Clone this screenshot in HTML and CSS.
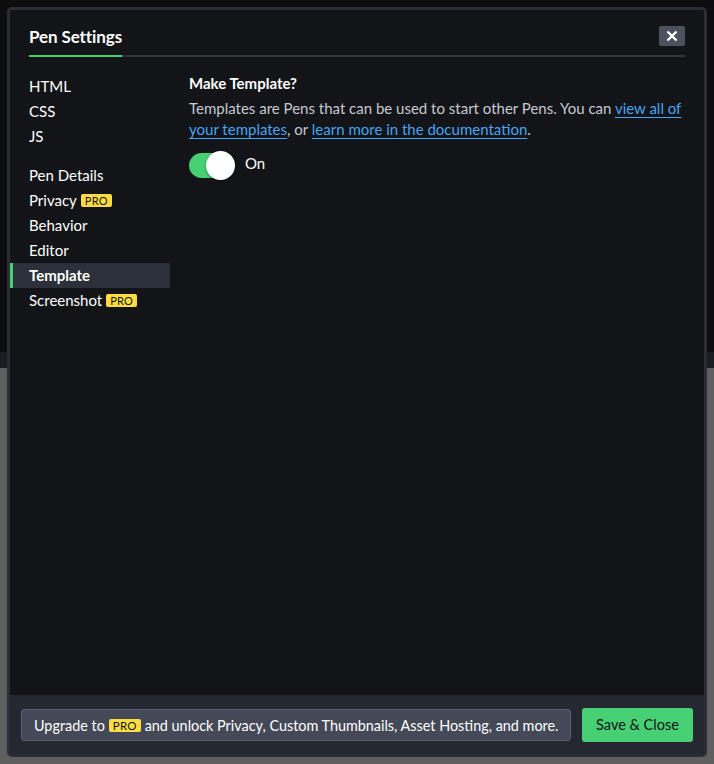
FILE: index.html
```html
<!DOCTYPE html>
<html>
<head>
<meta charset="utf-8">
<link rel="stylesheet" href="styles.css">
</head>
<body>
<div class="backdrop">
  <div class="bg-top"></div>
  <div class="bg-bar"></div>
  <div class="bg-bottom"></div>
</div>
<div class="modal">
  <div class="modal-main">
    <header class="modal-header">
      <h1 class="title">Pen Settings</h1>
      <button class="close" aria-label="Close">
        <svg width="12" height="12" viewBox="0 0 12 12"><path d="M1.5 1.5 L10.5 10.5 M10.5 1.5 L1.5 10.5" stroke="#fff" stroke-width="2.4" stroke-linecap="butt"/></svg>
      </button>
    </header>
    <div class="modal-body">
      <nav class="sidebar">
        <ul class="nav-group">
          <li class="nav-item">HTML</li>
          <li class="nav-item">CSS</li>
          <li class="nav-item">JS</li>
        </ul>
        <ul class="nav-group">
          <li class="nav-item">Pen Details</li>
          <li class="nav-item">Privacy <span class="pro">PRO</span></li>
          <li class="nav-item">Behavior</li>
          <li class="nav-item">Editor</li>
          <li class="nav-item active">Template</li>
          <li class="nav-item">Screenshot <span class="pro">PRO</span></li>
        </ul>
      </nav>
      <section class="content">
        <h2 class="heading">Make Template?</h2>
        <p class="desc">Templates are Pens that can be used to start other Pens. You can <a href="#">view all of your templates</a>, or <a href="#">learn more in the documentation</a>.</p>
        <div class="toggle-row">
          <span class="toggle"><span class="knob"></span></span>
          <span class="toggle-label">On</span>
        </div>
      </section>
    </div>
  </div>
  <footer class="modal-footer">
    <button class="upgrade">Upgrade to <span class="pro">PRO</span> and unlock Privacy, Custom Thumbnails, Asset Hosting, and more.</button>
    <button class="save">Save &amp; Close</button>
  </footer>
</div>
</body>
</html>
```
FILE: styles.css
```css
* { box-sizing: border-box; }
html, body { margin: 0; padding: 0; }
body {
  width: 714px;
  height: 764px;
  position: relative;
  overflow: hidden;
  font-family: Lato, "Noto Sans", sans-serif;
  background: #5d5d5d;
}
.backdrop {
  display: flex;
  flex-direction: column;
  height: 100%;
}
.bg-top { height: 352px; background: #0d0d0f; }
.bg-bar { height: 16px; background: #1c1d22; }
.bg-bottom { flex: 1; background: #5f5f5f; }

.modal {
  position: absolute;
  left: 7px;
  top: 7px;
  width: 700px;
  height: 750px;
  background: #131417;
  border: 3px solid #2b2c34;
  border-radius: 5px;
  display: flex;
  flex-direction: column;
  overflow: hidden;
}
.modal-main {
  flex: 1;
  display: flex;
  flex-direction: column;
}
.modal-header {
  margin: 0 19px;
  height: 47px;
  display: flex;
  align-items: flex-end;
  justify-content: space-between;
  border-bottom: 2px solid #34363f;
}
.title {
  margin: 0 0 -2px 0;
  font-size: 17px;
  font-weight: 700;
  color: #fff;
  padding-bottom: 8px;
  border-bottom: 2px solid #47cf73;
  width: 93px;
  white-space: nowrap;
  letter-spacing: -0.1px;
}
.close {
  width: 26px;
  height: 20px;
  background: #4d505e;
  border: none;
  border-radius: 2px;
  display: flex;
  align-items: center;
  justify-content: center;
  margin-bottom: 9px;
  padding: 0;
}
.modal-body {
  display: flex;
  padding-top: 16px;
}
.sidebar {
  width: 160px;
  flex-shrink: 0;
  padding-top: 1px;
}
.nav-group {
  list-style: none;
  margin: 0 0 14px 0;
  padding: 0;
}
.nav-item {
  height: 25px;
  line-height: 25px;
  padding-left: 19px;
  font-size: 15px;
  color: #fff;
  display: flex;
  align-items: center;
  gap: 4px;
}
.nav-item.active {
  background: #2c303a;
  font-weight: 700;
  box-shadow: inset 3px 0 0 #47cf73;
}
.pro {
  display: inline-block;
  background: #ffdd40;
  color: #131417;
  font-size: 11px;
  line-height: 13px;
  height: 13px;
  padding: 0 4px;
  border-radius: 2px;
  font-weight: 400;
  letter-spacing: 0.2px;
}
.content {
  padding-left: 19px;
  padding-right: 16px;
  flex: 1;
}
.heading {
  margin: 0 0 5px 0;
  font-size: 15px;
  font-weight: 700;
  color: #fff;
  line-height: 20px;
}
.desc {
  margin: 0;
  font-size: 15px;
  line-height: 21px;
  color: #c7c9d3;
}
.desc a {
  color: #47a3f3;
  text-decoration: underline;
  text-underline-offset: 3px;
  text-decoration-thickness: 1px;
}
.toggle-row {
  display: flex;
  align-items: center;
  gap: 11px;
  margin-top: 13px;
}
.toggle {
  width: 45px;
  height: 25px;
  border-radius: 13px;
  background: #47cf73;
  position: relative;
  display: inline-block;
}
.knob {
  position: absolute;
  right: -1px;
  top: -2px;
  width: 29px;
  height: 29px;
  border-radius: 50%;
  background: #fff;
  box-shadow: 0 1px 3px rgba(0,0,0,0.4);
}
.toggle-label {
  color: #fff;
  font-size: 15px;
  margin-top: -5px;
}
.modal-footer {
  height: 59px;
  background: #252830;
  display: flex;
  align-items: center;
  justify-content: space-between;
  padding: 0 11px;
  flex-shrink: 0;
}
.upgrade {
  font-family: Lato, "Noto Sans", sans-serif;
  height: 32px;
  width: 550px;
  background: #444857;
  border: 1px solid #5a5f73;
  border-radius: 3px;
  color: #fff;
  font-size: 14.4px;
  display: flex;
  align-items: center;
  gap: 4px;
  padding: 0 12px;
  white-space: nowrap;
  margin-top: 1px;
}
.upgrade .pro { font-size: 11.5px; padding: 0 4px; }
.save {
  font-family: Lato, "Noto Sans", sans-serif;
  height: 34px;
  width: 111px;
  background: #47cf73;
  border: none;
  border-radius: 3px;
  color: #131417;
  font-size: 14.5px;
  padding: 0;
}
```
